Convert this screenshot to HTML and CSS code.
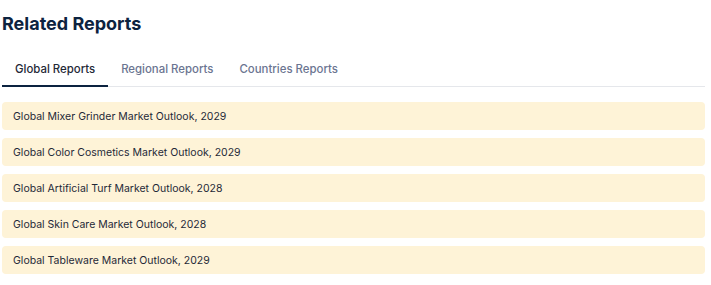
FILE: index.html
```html
<!DOCTYPE html>
<html>
<head>
<meta charset="utf-8">
<link rel="stylesheet" href="styles.css">
</head>
<body>
<section class="related">
  <h2 class="title">Related Reports</h2>
  <nav class="tabs">
    <span class="tab active">Global Reports</span>
    <span class="tab">Regional Reports</span>
    <span class="tab">Countries Reports</span>
  </nav>
  <ul class="list">
    <li class="item">Global Mixer Grinder Market Outlook, 2029</li>
    <li class="item">Global Color Cosmetics Market Outlook, 2029</li>
    <li class="item">Global Artificial Turf Market Outlook, 2028</li>
    <li class="item">Global Skin Care Market Outlook, 2028</li>
    <li class="item">Global Tableware Market Outlook, 2029</li>
  </ul>
</section>
</body>
</html>
```
FILE: styles.css
```css
* { box-sizing: border-box; }
html, body { margin: 0; padding: 0; background: #fff; }
body { font-family: Inter, "Noto Sans", sans-serif; }
.related { padding: 12px 6px 0 2px; }
.title {
  margin: 0;
  font-size: 18px;
  line-height: 24px;
  font-weight: 700;
  color: #0c2340;
}
.tabs {
  display: flex;
  margin-top: 20px;
  border-bottom: 1px solid #e5e7eb;
}
.tab {
  padding: 6px 13px 8px;
  font-size: 11.4px;
  line-height: 15px;
  font-weight: 500;
  color: #6b7591;
}
.tab.active {
  color: #1f2937;
  border-bottom: 2px solid #0c2340;
  margin-bottom: -1px;
}
.list {
  list-style: none;
  margin: 15px 0 0;
  padding: 0;
  display: flex;
  flex-direction: column;
  gap: 8px;
}
.item {
  height: 28px;
  display: flex;
  align-items: center;
  padding: 0 11px;
  background: #fef3d7;
  border-radius: 4px;
  font-size: 10.5px;
  color: #1f2937;
}
```
